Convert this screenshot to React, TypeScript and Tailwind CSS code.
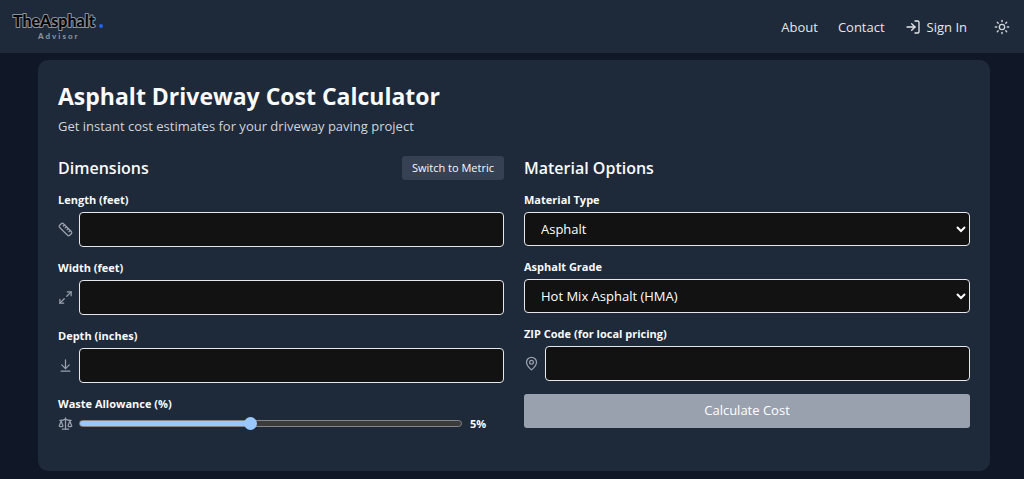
import React, { useState } from 'react';
import { ArrowDownToLine, LogIn, MapPin, Maximize2, Ruler, Scale, Sun } from 'lucide-react';

const MIN_WASTE = 1;
const MAX_WASTE = 10;

const labelClass = 'block mb-1 text-[11px] leading-4 font-bold text-gray-50';
const fieldClass = 'block w-full rounded border border-gray-200 bg-[#121212] text-[13px] text-white';
const iconClass = 'w-[15px] h-[15px] shrink-0 text-gray-400';

const Logo: React.FC = () => (
  <a href="/" aria-label="TheAsphalt Advisor">
    <svg className="block w-[94px] h-[32px]" viewBox="0 0 94 32">
      <text
        x="1"
        y="16"
        className="font-[family-name:Lato,sans-serif] font-black text-[16px]"
        fill="#050505"
        stroke="#8b929d"
        strokeWidth="2"
        strokeLinejoin="round"
        paintOrder="stroke"
      >
        TheAsphalt
      </text>
      <text x="26" y="28" className="font-[family-name:Lato,sans-serif] font-black text-[8px] tracking-[2px]" fill="#8b929d">
        Advisor
      </text>
      <circle cx="89" cy="15" r="2" fill="#2563eb" />
    </svg>
  </a>
);

const Header: React.FC = () => (
  <header className="flex items-center justify-between h-[53px] pl-3 pr-[14px] bg-gray-800">
    <Logo />
    <nav className="flex items-center text-[13px] leading-5 text-gray-200">
      <a href="/about" className="mr-5">About</a>
      <a href="/contact" className="mr-5">Contact</a>
      <a href="/login" className="flex items-center gap-[6px] mr-[27px]">
        <LogIn className="w-4 h-4" />
        Sign In
      </a>
      <button type="button" aria-label="Toggle theme" className="text-gray-300">
        <Sun className="w-4 h-4" />
      </button>
    </nav>
  </header>
);

interface IconInputProps {
  id: string;
  label: string;
  icon: React.ReactNode;
  value: string;
  onChange: (value: string) => void;
}

const IconInput: React.FC<IconInputProps> = ({ id, label, icon, value, onChange }) => (
  <div>
    <label htmlFor={id} className={labelClass}>{label}</label>
    <div className="flex items-center gap-[6px]">
      {icon}
      <input
        id={id}
        type="text"
        value={value}
        onChange={(e) => onChange(e.target.value)}
        className={`${fieldClass} h-[35px] px-3`}
      />
    </div>
  </div>
);

const App: React.FC = () => {
  const [metric, setMetric] = useState(false);
  const [length, setLength] = useState('');
  const [width, setWidth] = useState('');
  const [depth, setDepth] = useState('');
  const [waste, setWaste] = useState(5);
  const [material, setMaterial] = useState('asphalt');
  const [grade, setGrade] = useState('hma');
  const [zip, setZip] = useState('');

  const canCalculate = Boolean(length && width && depth && zip);
  const wastePercent = ((waste - MIN_WASTE) / (MAX_WASTE - MIN_WASTE)) * 100;

  return (
    <div className="min-h-screen bg-gray-900 font-[family-name:Open_Sans,sans-serif]">
      <Header />
      <main className="pt-[7px] pb-2 pl-[38px] pr-[34px]">
        <div className="rounded-[10px] bg-gray-800 px-5 pt-5 pb-10">
          <h1 className="text-[23px] leading-8 font-bold text-gray-50">Asphalt Driveway Cost Calculator</h1>
          <p className="mt-1 text-[13px] leading-5 text-gray-300">
            Get instant cost estimates for your driveway paving project
          </p>

          <form className="grid grid-cols-2 gap-5 mt-5" onSubmit={(e) => e.preventDefault()}>
            <section>
              <div className="flex items-center justify-between h-6 mb-3">
                <h2 className="text-base font-semibold text-gray-50">Dimensions</h2>
                <button
                  type="button"
                  onClick={() => setMetric(!metric)}
                  className="h-6 px-[10px] rounded-[3px] bg-gray-700 text-[11px] text-gray-50"
                >
                  {metric ? 'Switch to Imperial' : 'Switch to Metric'}
                </button>
              </div>

              <div className="flex flex-col gap-[13px]">
                <IconInput
                  id="length"
                  label={metric ? 'Length (meters)' : 'Length (feet)'}
                  icon={<Ruler className={iconClass} />}
                  value={length}
                  onChange={setLength}
                />
                <IconInput
                  id="width"
                  label={metric ? 'Width (meters)' : 'Width (feet)'}
                  icon={<Maximize2 className={iconClass} />}
                  value={width}
                  onChange={setWidth}
                />
                <IconInput
                  id="depth"
                  label={metric ? 'Depth (cm)' : 'Depth (inches)'}
                  icon={<ArrowDownToLine className={iconClass} />}
                  value={depth}
                  onChange={setDepth}
                />
                <div>
                  <label htmlFor="waste" className={labelClass}>Waste Allowance (%)</label>
                  <div className="flex items-center gap-[6px] h-[15px]">
                    <Scale className={iconClass} />
                    <input
                      id="waste"
                      type="range"
                      min={MIN_WASTE}
                      max={MAX_WASTE}
                      value={waste}
                      onChange={(e) => setWaste(Number(e.target.value))}
                      style={{
                        backgroundImage: `linear-gradient(to right, #99c8ff ${wastePercent}%, #3b3b3b ${wastePercent}%)`,
                      }}
                      className="flex-1 min-w-0 h-[7px] appearance-none rounded-full border border-[#858585] bg-[#3b3b3b] [&::-webkit-slider-thumb]:appearance-none [&::-webkit-slider-thumb]:w-[13px] [&::-webkit-slider-thumb]:h-[13px] [&::-webkit-slider-thumb]:rounded-full [&::-webkit-slider-thumb]:bg-[#99c8ff]"
                    />
                    <span className="w-9 pl-[2px] text-[11px] leading-4 font-bold text-gray-50">{waste}%</span>
                  </div>
                </div>
              </div>
            </section>

            <section>
              <h2 className="h-6 mb-3 text-base font-semibold text-gray-50">Material Options</h2>

              <div className="flex flex-col gap-[13px]">
                <div>
                  <label htmlFor="material" className={labelClass}>Material Type</label>
                  <select
                    id="material"
                    value={material}
                    onChange={(e) => setMaterial(e.target.value)}
                    className={`${fieldClass} h-[34px] pl-3 scheme-dark`}
                  >
                    <option value="asphalt">Asphalt</option>
                    <option value="concrete">Concrete</option>
                    <option value="gravel">Gravel</option>
                  </select>
                </div>
                <div>
                  <label htmlFor="grade" className={labelClass}>Asphalt Grade</label>
                  <select
                    id="grade"
                    value={grade}
                    onChange={(e) => setGrade(e.target.value)}
                    className={`${fieldClass} h-[34px] pl-3 scheme-dark`}
                  >
                    <option value="hma">Hot Mix Asphalt (HMA)</option>
                    <option value="wma">Warm Mix Asphalt (WMA)</option>
                    <option value="cma">Cold Mix Asphalt (CMA)</option>
                  </select>
                </div>
                <IconInput
                  id="zip"
                  label="ZIP Code (for local pricing)"
                  icon={<MapPin className={iconClass} />}
                  value={zip}
                  onChange={setZip}
                />
                <button
                  type="submit"
                  disabled={!canCalculate}
                  className="w-full h-[34px] rounded-[3px] bg-blue-600 text-[13px] text-white disabled:bg-gray-400"
                >
                  Calculate Cost
                </button>
              </div>
            </section>
          </form>
        </div>
      </main>
    </div>
  );
};

export default App;
